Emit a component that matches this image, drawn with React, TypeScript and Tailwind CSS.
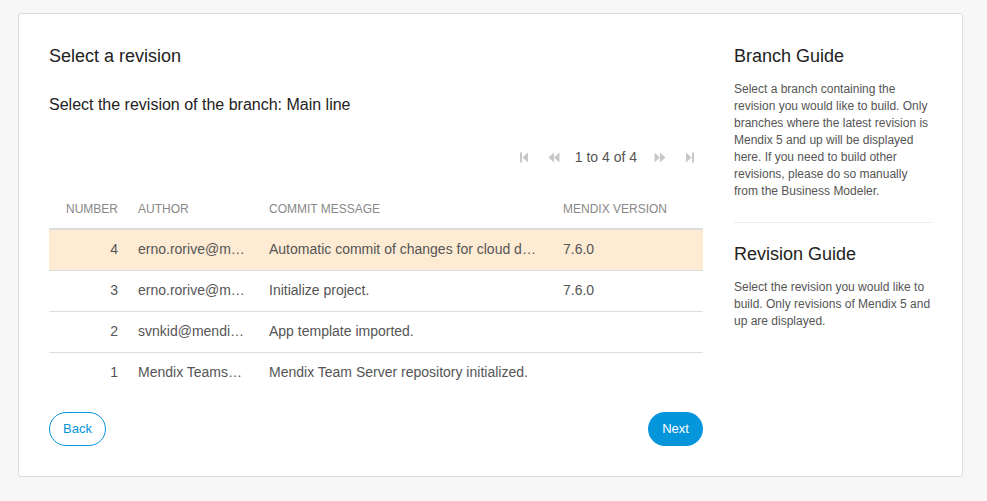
import React from "react";

type Revision = {
  number: number;
  author: string;
  message: string;
  version: string;
};

const revisions: Revision[] = [
  { number: 4, author: "erno.rorive@mendix.com", message: "Automatic commit of changes for cloud deployment", version: "7.6.0" },
  { number: 3, author: "erno.rorive@mendix.com", message: "Initialize project.", version: "7.6.0" },
  { number: 2, author: "svnkid@mendix.com", message: "App template imported.", version: "" },
  { number: 1, author: "Mendix Teamserver", message: "Mendix Team Server repository initialized.", version: "" },
];

function FirstIcon() {
  return (
    <svg width="10" height="11" viewBox="0 0 10 11" className="fill-[#c8c8c8]">
      <rect x="1" y="0.5" width="2" height="10" />
      <path d="M9 0.5 L3.5 5.5 L9 10.5 Z" />
    </svg>
  );
}

function PrevIcon() {
  return (
    <svg width="12" height="11" viewBox="0 0 12 11" className="fill-[#c8c8c8]">
      <path d="M6 0.5 L0.5 5.5 L6 10.5 Z" />
      <path d="M11.5 0.5 L6 5.5 L11.5 10.5 Z" />
    </svg>
  );
}

function NextIcon() {
  return (
    <svg width="12" height="11" viewBox="0 0 12 11" className="fill-[#c8c8c8]">
      <path d="M0.5 0.5 L6 5.5 L0.5 10.5 Z" />
      <path d="M6 0.5 L11.5 5.5 L6 10.5 Z" />
    </svg>
  );
}

function LastIcon() {
  return (
    <svg width="10" height="11" viewBox="0 0 10 11" className="fill-[#c8c8c8]">
      <path d="M1 0.5 L6.5 5.5 L1 10.5 Z" />
      <rect x="7" y="0.5" width="2" height="10" />
    </svg>
  );
}

export default function App() {
  return (
    <div className="min-h-[501px] bg-[#f7f7f7] px-[18px] pt-[13px] pb-6 font-['Liberation_Sans',Arial,sans-serif]">
      <div className="flex w-[945px] gap-[31px] rounded-[3px] border border-[#dcdcdc] bg-white px-[30px] pt-[30px] pb-[30px]">
        {/* main column */}
        <div className="flex w-[654px] flex-col">
          <h2 className="text-[18px] leading-6 text-[#222]">Select a revision</h2>
          <p className="mt-[25px] text-[16px] leading-6 text-[#222]">
            Select the revision of the branch: Main line
          </p>

          <div className="mt-[28px] flex h-6 items-center justify-end text-[14px] text-[#555]">
            <span className="flex w-[30px] justify-center"><FirstIcon /></span>
            <span className="flex w-[30px] justify-center"><PrevIcon /></span>
            <span className="px-[6px]">1 to 4 of 4</span>
            <span className="flex w-[34px] justify-center"><NextIcon /></span>
            <span className="flex w-[26px] justify-center"><LastIcon /></span>
          </div>

          <table className="mt-[20px] w-full table-fixed border-collapse">
            <colgroup>
              <col className="w-[81px]" />
              <col className="w-[131px]" />
              <col className="w-[294px]" />
              <col />
            </colgroup>
            <thead>
              <tr className="h-[40px] border-b-2 border-[#dddddd] text-[12px] uppercase text-[#888]">
                <th className="pr-[12px] text-right font-normal">Number</th>
                <th className="px-[8px] text-left font-normal">Author</th>
                <th className="px-[8px] text-left font-normal">Commit message</th>
                <th className="px-[8px] text-left font-normal">Mendix version</th>
              </tr>
            </thead>
            <tbody>
              {revisions.map((r, i) => (
                <tr
                  key={r.number}
                  className={
                    "h-[41px] text-[14px] text-[#555] " +
                    (i === 0 ? "bg-[#feebd3] " : "") +
                    (i < revisions.length - 1 ? "border-b border-[#dddddd]" : "")
                  }
                >
                  <td className="pr-[12px] text-right">{r.number}</td>
                  <td className="truncate pl-[8px] pr-[12px]">{r.author}</td>
                  <td className="truncate pl-[8px] pr-[17px]">{r.message}</td>
                  <td className="truncate px-[8px]">{r.version}</td>
                </tr>
              ))}
            </tbody>
          </table>

          <div className="mt-[19px] flex items-center justify-between">
            <button className="h-[34px] w-[57px] rounded-full border border-[#0595db] text-[13px] text-[#0595db]">
              Back
            </button>
            <button className="h-[34px] w-[55px] rounded-full bg-[#0595db] text-[13px] text-white">
              Next
            </button>
          </div>
        </div>

        {/* guide column */}
        <div className="w-[198px]">
          <h3 className="text-[18px] leading-6 text-[#222]">Branch Guide</h3>
          <p className="mt-[13px] text-[12px] leading-[17px] text-[#555]">
            Select a branch containing the revision you would like to build. Only branches where the
            latest revision is Mendix 5 and up will be displayed here. If you need to build other
            revisions, please do so manually from the Business Modeler.
          </p>
          <div className="mt-[22px] border-t border-[#ececec]" />
          <h3 className="mt-[19px] text-[18px] leading-6 text-[#222]">Revision Guide</h3>
          <p className="mt-[13px] text-[12px] leading-[17px] text-[#555]">
            Select the revision you would like to build. Only revisions of Mendix 5 and up are
            displayed.
          </p>
        </div>
      </div>
    </div>
  );
}
